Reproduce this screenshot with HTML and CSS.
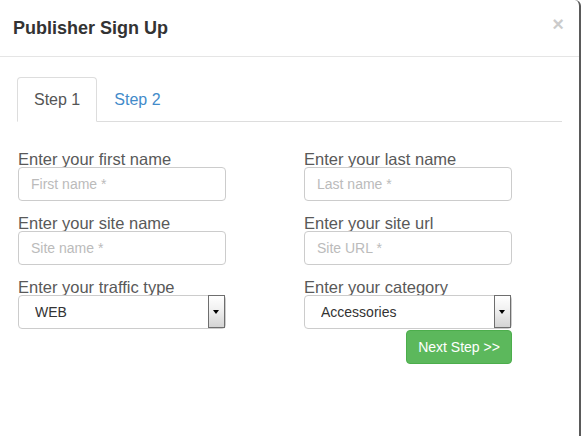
FILE: index.html
```html
<!DOCTYPE html>
<html>
<head>
<meta charset="utf-8">
<link rel="stylesheet" href="styles.css">
</head>
<body>
<div class="modal">
  <div class="modal-header">
    <h4 class="title">Publisher Sign Up</h4>
    <button class="close" type="button">×</button>
  </div>
  <div class="modal-body">
    <ul class="tabs">
      <li class="tab active"><a>Step 1</a></li>
      <li class="tab"><a>Step 2</a></li>
    </ul>
    <form class="grid">
      <div class="field">
        <label class="lbl">Enter your first name</label>
        <input class="ctrl" type="text" placeholder="First name *">
      </div>
      <div class="field">
        <label class="lbl">Enter your last name</label>
        <input class="ctrl" type="text" placeholder="Last name *">
      </div>
      <div class="field">
        <label class="lbl">Enter your site name</label>
        <input class="ctrl" type="text" placeholder="Site name *">
      </div>
      <div class="field">
        <label class="lbl">Enter your site url</label>
        <input class="ctrl" type="text" placeholder="Site URL *">
      </div>
      <div class="field">
        <label class="lbl">Enter your traffic type</label>
        <div class="select-wrap">
          <select class="ctrl sel"><option>WEB</option></select>
          <span class="arrow"></span>
        </div>
      </div>
      <div class="field">
        <label class="lbl">Enter your category</label>
        <div class="select-wrap">
          <select class="ctrl sel"><option>Accessories</option></select>
          <span class="arrow"></span>
        </div>
        <button class="next" type="button">Next Step &gt;&gt;</button>
      </div>
    </form>
  </div>
</div>
</body>
</html>
```

FILE: styles.css
```css
* { box-sizing: border-box; }
html, body { margin: 0; padding: 0; background: #ffffff; }
body {
  font-family: "Liberation Sans", Arial, sans-serif;
  width: 581px;
  height: 436px;
  overflow: hidden;
}
.modal {
  width: 581px;
  height: 436px;
  background: #fff;
  border-right: 2px solid #5a5a5a;
  border-top-right-radius: 6px;
}
.modal-header {
  display: flex;
  justify-content: space-between;
  align-items: flex-start;
  padding: 15px 15px 15px 13px;
  border-bottom: 1px solid #e5e5e5;
}
.title {
  margin: 0;
  font-size: 18px;
  font-weight: bold;
  line-height: 26px;
  color: #333;
}
.close {
  border: 0;
  background: transparent;
  padding: 0;
  margin-top: -1px;
  font-family: "Liberation Sans", Arial, sans-serif;
  font-size: 20px;
  font-weight: bold;
  line-height: 1;
  color: #000;
  opacity: 0.2;
}
.modal-body {
  padding: 20px 17px;
}
.tabs {
  list-style: none;
  margin: 0;
  padding: 0;
  display: flex;
  border-bottom: 1px solid #ddd;
}
.tab {
  margin-bottom: -1px;
  margin-right: 0;
}
.tab a {
  display: block;
  padding: 10px 16px;
  font-size: 16px;
  line-height: 23px;
  color: #428bca;
  border: 1px solid transparent;
  border-radius: 4px 4px 0 0;
}
.tab.active a {
  color: #555;
  background: #fff;
  border-color: #ddd #ddd transparent #ddd;
}
.grid {
  display: grid;
  grid-template-columns: 286px 286px;
  row-gap: 14px;
  margin-top: 29px;
  padding-left: 1px;
}
.field {
  width: 208px;
  display: flex;
  flex-direction: column;
}
.lbl {
  font-size: 16.5px;
  line-height: 16px;
  height: 16px;
  color: #595959;
  white-space: nowrap;
}
.ctrl {
  width: 208px;
  height: 34px;
  border: 1px solid #ccc;
  border-radius: 4px;
  padding: 6px 12px;
  font-family: "Liberation Sans", Arial, sans-serif;
  font-size: 14px;
  color: #555;
  background: #fff;
  outline: none;
}
.ctrl::placeholder { color: #bbb; }
.select-wrap {
  position: relative;
  width: 208px;
  height: 34px;
}
.sel {
  -webkit-appearance: none;
  appearance: none;
  padding: 6px 16px;
  color: #333;
}
.arrow {
  position: absolute;
  right: 1px;
  top: 0;
  bottom: 1px;
  width: 17px;
  border: 1px solid #6e6e6e;
  background: linear-gradient(#ffffff, #f2f2f2 40%, #d4d4d4);
  pointer-events: none;
}
.arrow::after {
  content: "";
  position: absolute;
  left: 4px;
  top: 14px;
  border-left: 3.5px solid transparent;
  border-right: 3.5px solid transparent;
  border-top: 4px solid #000;
}
.next {
  align-self: flex-end;
  width: 106px;
  height: 34px;
  margin-top: 1px;
  padding: 0;
  border: 1px solid #4cae4c;
  border-radius: 4px;
  background: #5cb85c;
  color: #fff;
  font-family: "Liberation Sans", Arial, sans-serif;
  font-size: 14px;
}
```
